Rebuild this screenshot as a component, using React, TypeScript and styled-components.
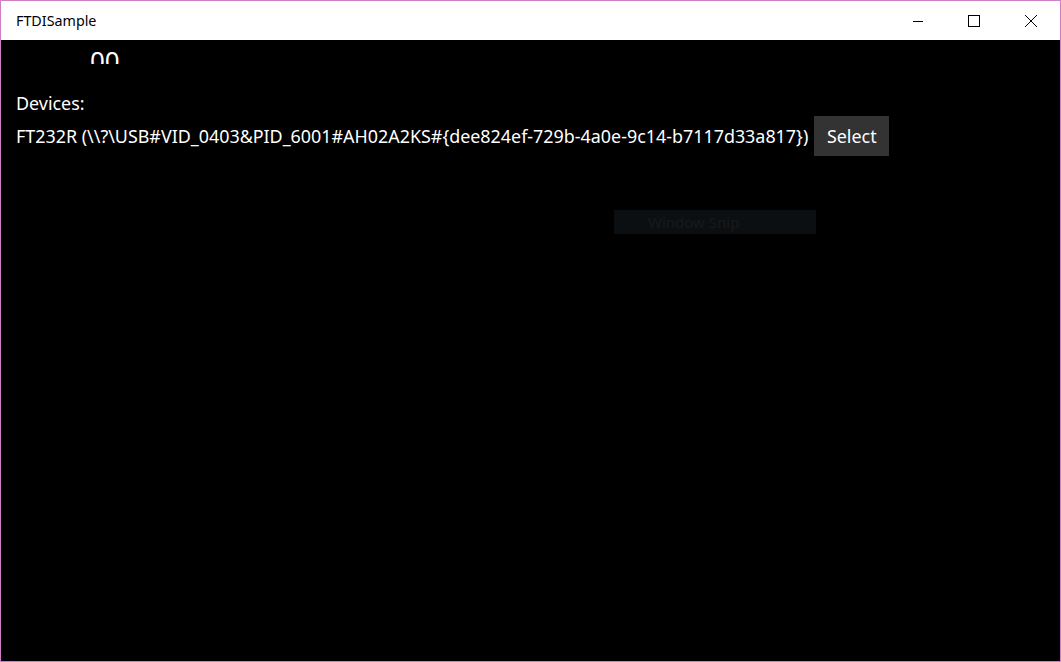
import React from "react";
import styled, { createGlobalStyle } from "styled-components";

const Global = createGlobalStyle`
  html, body { margin: 0; padding: 0; background: #000; }
  body { font-family: "Segoe UI", "Noto Sans", "Open Sans", sans-serif; }
  * { box-sizing: border-box; }
`;

const Window = styled.div`
  position: relative;
  width: 1061px;
  height: 662px;
  border: 1px solid #cf7fc8;
  display: flex;
  flex-direction: column;
  background: #000;
  overflow: hidden;
`;

const TitleBar = styled.div`
  height: 39px;
  flex: none;
  background: #fff;
  display: flex;
  align-items: center;
  padding-left: 15px;
  padding-right: 1px;
`;

const Title = styled.div`
  flex: 1;
  font-size: 14.3px;
  color: #000;
`;

const Caption = styled.div`
  width: 56.5px;
  height: 39px;
  display: flex;
  align-items: center;
  justify-content: center;
`;

const Content = styled.div`
  flex: 1;
  display: flex;
  flex-direction: column;
  color: #fff;
`;

const Clip = styled.div`
  height: 24px;
  overflow: hidden;
  padding-left: 89px;
`;

const BigNum = styled.div`
  font-size: 26px;
  line-height: 26px;
  margin-top: 7px;
`;

const Label = styled.div`
  font-size: 17.9px;
  line-height: 22px;
  padding-left: 15px;
  margin-top: 28px;
`;

const Row = styled.div`
  display: flex;
  align-items: center;
  padding-left: 15px;
  margin-top: 2px;
  gap: 6px;
`;

const DeviceText = styled.div`
  font-size: 17.9px;
  white-space: nowrap;
`;

const Button = styled.button`
  width: 75px;
  height: 40px;
  background: #333;
  border: none;
  color: #fff;
  font-family: inherit;
  font-size: 17.9px;
  padding: 0;
`;

const Snip = styled.div`
  position: absolute;
  left: 613px;
  top: 209px;
  width: 202px;
  height: 24px;
  background: #0c0f12;
  color: #191919;
  font-size: 15px;
  line-height: 24px;
  padding-left: 34px;
`;

export default function App() {
  return (
    <>
      <Global />
      <Window>
        <TitleBar>
          <Title>FTDISample</Title>
          <Caption>
            <svg width="12" height="12" viewBox="0 0 12 12">
              <line x1="1" y1="6.5" x2="11" y2="6.5" stroke="#000" strokeWidth="1" />
            </svg>
          </Caption>
          <Caption>
            <svg width="12" height="12" viewBox="0 0 12 12">
              <rect x="0.5" y="0.5" width="11" height="11" fill="none" stroke="#000" strokeWidth="1" />
            </svg>
          </Caption>
          <Caption>
            <svg width="14" height="14" viewBox="0 0 14 14">
              <path d="M1 1 L13 13 M13 1 L1 13" stroke="#000" strokeWidth="1" />
            </svg>
          </Caption>
        </TitleBar>
        <Content>
          <Clip>
            <BigNum>00</BigNum>
          </Clip>
          <Label>Devices:</Label>
          <Row>
            <DeviceText>
              {"FT232R (\\\\?\\USB#VID_0403&PID_6001#AH02A2KS#{dee824ef-729b-4a0e-9c14-b7117d33a817})"}
            </DeviceText>
            <Button>Select</Button>
          </Row>
        </Content>
        <Snip>Window Snip</Snip>
      </Window>
    </>
  );
}
